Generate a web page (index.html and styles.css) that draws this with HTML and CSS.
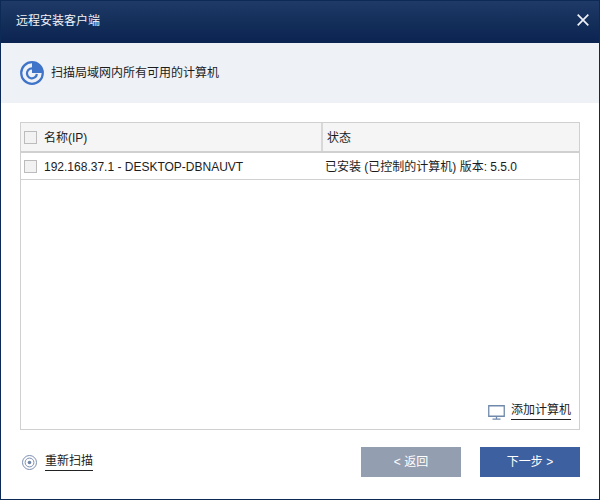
FILE: index.html
```html
<!DOCTYPE html>
<html lang="zh">
<head>
<meta charset="utf-8">
<title>远程安装客户端</title>
<link rel="stylesheet" href="styles.css">
</head>
<body>
<div class="window">
  <header class="titlebar">
    <span class="title">远程安装客户端</span>
    <svg class="close" width="12" height="12" viewBox="0 0 12 12"><path d="M.7.7l10.6 10.6M11.3.7L.7 11.3" stroke="#eef1f6" stroke-width="1.7" fill="none"/></svg>
  </header>
  <section class="band">
    <svg class="band-icon" width="24" height="24" viewBox="0 0 24 24">
      <circle cx="12" cy="12" r="10.8" fill="none" stroke="#3f74c9" stroke-width="2.2"/>
      <path d="M12 1.2A10.8 10.8 0 0 1 22.8 12H12z" fill="#3f74c9"/>
      <path d="M14 7.8A5 5 0 1 0 16.9 13" fill="none" stroke="#3f74c9" stroke-width="2.2"/>
    </svg>
    <span class="band-text">扫描局域网内所有可用的计算机</span>
  </section>
  <main class="content">
    <div class="table">
      <div class="row head">
        <div class="cell name"><span class="check"></span><span>名称(IP)</span></div>
        <div class="cell status">状态</div>
      </div>
      <div class="row item">
        <div class="cell name"><span class="check"></span><span>192.168.37.1 - DESKTOP-DBNAUVT</span></div>
        <div class="cell status">已安装 (已控制的计算机) 版本: 5.5.0</div>
      </div>
      <div class="table-fill">
        <svg width="17" height="15" viewBox="0 0 17 15"><path d="M.75.75h15.5v10.5H.75zM8.5 11v3M4.5 14.2h8" fill="none" stroke="#7089ab" stroke-width="1.3"/></svg>
        <span class="link">添加计算机</span>
      </div>
    </div>
    <footer class="footer">
      <div class="rescan">
        <svg class="rescan-icon" width="15" height="15" viewBox="0 0 15 15"><circle cx="7.5" cy="7.5" r="7" fill="none" stroke="#7b8fb0" stroke-width="1"/><circle cx="7.5" cy="7.5" r="4.4" fill="none" stroke="#7b8fb0" stroke-width="1"/><circle cx="7.5" cy="7.5" r="1.8" fill="#6f84a6"/></svg>
        <span class="link">重新扫描</span>
      </div>
      <div class="buttons">
        <button class="btn back">&lt; 返回</button>
        <button class="btn next">下一步 &gt;</button>
      </div>
    </footer>
  </main>
</div>
</body>
</html>
```
FILE: styles.css
```css
* { box-sizing: border-box; }
html, body { margin: 0; padding: 0; }
body {
  width: 600px;
  height: 500px;
  font: 12px/16px "Liberation Sans", "Noto Sans CJK SC", sans-serif;
  color: #1c1c1c;
  background: #fff;
}
.window {
  width: 600px;
  height: 500px;
  border: 1px solid #0d2a56;
  display: flex;
  flex-direction: column;
}
.titlebar {
  height: 42px;
  flex: none;
  display: flex;
  align-items: center;
  justify-content: space-between;
  padding: 0 10px 3px 15px;
  background: linear-gradient(#1f3a66, #0a2350);
}
.title { color: #f2f4f8; }
.close { display: block; margin-bottom: 2px; }
.band {
  height: 60px;
  flex: none;
  display: flex;
  align-items: center;
  gap: 7px;
  padding: 0 0 0 19px;
  background: #eef1f6;
}
.band-icon { display: block; }
.content {
  flex: 1;
  display: flex;
  flex-direction: column;
  padding: 19px 19px 0;
}
.table {
  height: 308px;
  border: 1px solid #d0d0d0;
  display: flex;
  flex-direction: column;
}
.row { display: flex; flex: none; border-bottom: 1px solid #d0d0d0; }
.head { height: 30px; background: #f5f5f5; border-bottom-width: 2px; }
.item { height: 27px; }
.cell { display: flex; align-items: center; }
.name { width: 300px; gap: 7px; padding-left: 3px; }
.name > span:last-child { padding-top: 1px; }
.item .name > span:last-child { padding-top: 2px; }
.status { flex: 1; padding-top: 1px; }
.head .status { border-left: 2px solid #d8d8d8; padding-left: 4px; }
.item .status { padding: 2px 0 0 4px; }
.check {
  width: 13px;
  height: 13px;
  border: 1px solid #bcbcbc;
  background: #f2f2f2;
  flex: none;
}
.table-fill {
  flex: 1;
  display: flex;
  align-items: flex-end;
  justify-content: flex-end;
  gap: 6px;
  padding: 0 8px 9px 0;
}
.link { border-bottom: 1px solid #222; padding-bottom: 1px; }
.footer {
  flex: 1;
  display: flex;
  align-items: flex-start;
  justify-content: space-between;
  padding-top: 17px;
}
.rescan { display: flex; align-items: center; gap: 8px; padding: 6px 0 0 2px; }
.rescan-icon { margin-top: 1px; }
.buttons { display: flex; gap: 19px; }
.btn {
  width: 100px;
  height: 30px;
  border: 0;
  padding: 0;
  color: #fff;
  font: inherit;
}
.back { background: #949eb1; }
.next { background: #3d61a0; }
```
